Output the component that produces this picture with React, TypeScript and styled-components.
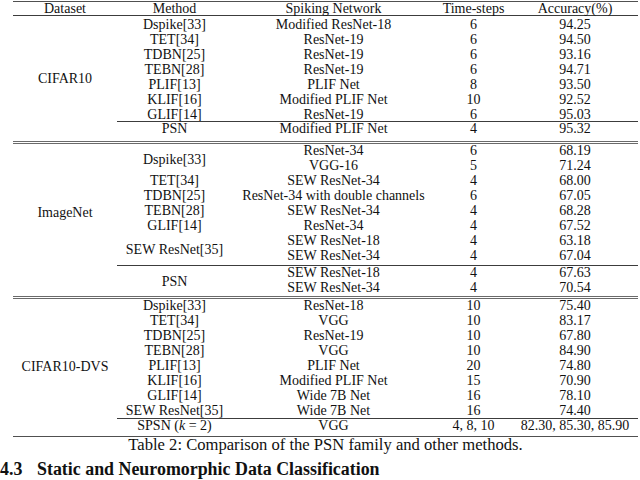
import React from "react";
import styled, { createGlobalStyle } from "styled-components";

const Global = createGlobalStyle`
  html, body { margin: 0; padding: 0; background: #ffffff; }
  body {
    font-family: "Liberation Serif", "Times New Roman", serif;
    color: #111111;
  }
`;

const Page = styled.div`
  width: 640px;
  height: 480px;
  overflow: hidden;
  padding-top: 1px;
  box-sizing: border-box;
`;

const Table = styled.div`
  margin-left: 13px;
  width: 625px;
  font-size: 14px;
`;

const Rule = styled.div<{ $tone?: string }>`
  height: 1px;
  background: ${(p) => p.$tone ?? "#3c3c3c"};
`;

const DoubleRule = styled.div`
  height: 3px;
  box-sizing: border-box;
  border-top: 1px solid #6a6a6a;
  border-bottom: 1px solid #6a6a6a;
`;

const Grid = styled.div<{ $rows: string }>`
  display: grid;
  grid-template-columns: 104px 115px 203px 77px 126px;
  grid-template-rows: ${(p) => p.$rows};
`;

const Cell = styled.div<{ $col: number; $row: string }>`
  grid-column: ${(p) => p.$col};
  grid-row: ${(p) => p.$row};
  text-align: center;
  line-height: 13px;
  white-space: nowrap;
`;

const SpanCell = styled.div<{ $col: number; $row: string }>`
  grid-column: ${(p) => p.$col};
  grid-row: ${(p) => p.$row};
  display: flex;
  align-items: center;
  justify-content: center;
  line-height: 13px;
  white-space: nowrap;
`;

const Cline = styled.div<{ $row: number }>`
  grid-column: 2 / -1;
  grid-row: ${(p) => p.$row};
  background: #3c3c3c;
`;

const MathVar = styled.i`
  font-style: italic;
`;

const Caption = styled.div`
  font-size: 16.6px;
  line-height: 16px;
  text-align: center;
  white-space: nowrap;
`;

const Heading = styled.div`
  margin-top: 7px;
  display: flex;
  font-size: 17.9px;
  line-height: 18px;
  font-weight: bold;
  white-space: nowrap;
`;

const SectionNumber = styled.span`
  width: 37px;
  flex: none;
`;

type Row = {
  track: number;
  method?: React.ReactNode;
  methodSpan?: string;
  net: React.ReactNode;
  t: string;
  acc: string;
};

type Block = {
  name: string;
  nameSpan: string;
  rows: string;
  clines: number[];
  data: Row[];
};

const blocks: Block[] = [
  {
    name: "CIFAR10",
    nameSpan: "1 / -1",
    rows: "2px repeat(6, 15px) 13px 1px 15px 4px",
    clines: [9],
    data: [
      { track: 2, method: "Dspike[33]", net: "Modified ResNet-18", t: "6", acc: "94.25" },
      { track: 3, method: "TET[34]", net: "ResNet-19", t: "6", acc: "94.50" },
      { track: 4, method: "TDBN[25]", net: "ResNet-19", t: "6", acc: "93.16" },
      { track: 5, method: "TEBN[28]", net: "ResNet-19", t: "6", acc: "94.71" },
      { track: 6, method: "PLIF[13]", net: "PLIF Net", t: "8", acc: "93.50" },
      { track: 7, method: "KLIF[16]", net: "Modified PLIF Net", t: "10", acc: "92.52" },
      { track: 8, method: "GLIF[14]", net: "ResNet-19", t: "6", acc: "95.03" },
      { track: 10, method: "PSN", net: "Modified PLIF Net", t: "4", acc: "95.32" },
    ],
  },
  {
    name: "ImageNet",
    nameSpan: "1 / 12",
    rows: "repeat(8, 15px) 1px 1px 15px 15px",
    clines: [10],
    data: [
      { track: 1, method: "Dspike[33]", methodSpan: "1 / 3", net: "ResNet-34", t: "6", acc: "68.19" },
      { track: 2, net: "VGG-16", t: "5", acc: "71.24" },
      { track: 3, method: "TET[34]", net: "SEW ResNet-34", t: "4", acc: "68.00" },
      { track: 4, method: "TDBN[25]", net: "ResNet-34 with double channels", t: "6", acc: "67.05" },
      { track: 5, method: "TEBN[28]", net: "SEW ResNet-34", t: "4", acc: "68.28" },
      { track: 6, method: "GLIF[14]", net: "ResNet-34", t: "4", acc: "67.52" },
      { track: 7, method: "SEW ResNet[35]", methodSpan: "7 / 9", net: "SEW ResNet-18", t: "4", acc: "63.18" },
      { track: 8, net: "SEW ResNet-34", t: "4", acc: "67.04" },
      { track: 11, method: "PSN", methodSpan: "11 / 13", net: "SEW ResNet-18", t: "4", acc: "67.63" },
      { track: 12, net: "SEW ResNet-34", t: "4", acc: "70.54" },
    ],
  },
  {
    name: "CIFAR10-DVS",
    nameSpan: "1 / 11",
    rows: "repeat(7, 15px) 14px 1px 15px 2px",
    clines: [9],
    data: [
      { track: 1, method: "Dspike[33]", net: "ResNet-18", t: "10", acc: "75.40" },
      { track: 2, method: "TET[34]", net: "VGG", t: "10", acc: "83.17" },
      { track: 3, method: "TDBN[25]", net: "ResNet-19", t: "10", acc: "67.80" },
      { track: 4, method: "TEBN[28]", net: "VGG", t: "10", acc: "84.90" },
      { track: 5, method: "PLIF[13]", net: "PLIF Net", t: "20", acc: "74.80" },
      { track: 6, method: "KLIF[16]", net: "Modified PLIF Net", t: "15", acc: "70.90" },
      { track: 7, method: "GLIF[14]", net: "Wide 7B Net", t: "16", acc: "78.10" },
      { track: 8, method: "SEW ResNet[35]", net: "Wide 7B Net", t: "16", acc: "74.40" },
      {
        track: 10,
        method: (
          <>
            SPSN (<MathVar>k</MathVar> = 2)
          </>
        ),
        net: "VGG",
        t: "4, 8, 10",
        acc: "82.30, 85.30, 85.90",
      },
    ],
  },
];

function BlockGrid({ block }: { block: Block }) {
  return (
    <Grid $rows={block.rows}>
      <SpanCell $col={1} $row={block.nameSpan}>
        {block.name}
      </SpanCell>
      {block.data.map((r) => (
        <React.Fragment key={r.track}>
          {r.method !== undefined &&
            (r.methodSpan ? (
              <SpanCell $col={2} $row={r.methodSpan}>
                {r.method}
              </SpanCell>
            ) : (
              <Cell $col={2} $row={String(r.track)}>
                {r.method}
              </Cell>
            ))}
          <Cell $col={3} $row={String(r.track)}>
            {r.net}
          </Cell>
          <Cell $col={4} $row={String(r.track)}>
            {r.t}
          </Cell>
          <Cell $col={5} $row={String(r.track)}>
            {r.acc}
          </Cell>
        </React.Fragment>
      ))}
      {block.clines.map((c) => (
        <Cline key={c} $row={c} />
      ))}
    </Grid>
  );
}

export default function App() {
  return (
    <Page>
      <Global />
      <Table>
        <Rule $tone="#505050" />
        <Grid $rows="13px">
          <Cell $col={1} $row="1">Dataset</Cell>
          <Cell $col={2} $row="1">Method</Cell>
          <Cell $col={3} $row="1">Spiking Network</Cell>
          <Cell $col={4} $row="1">Time-steps</Cell>
          <Cell $col={5} $row="1">Accuracy(%)</Cell>
        </Grid>
        <Rule />
        <BlockGrid block={blocks[0]} />
        <DoubleRule />
        <BlockGrid block={blocks[1]} />
        <DoubleRule />
        <BlockGrid block={blocks[2]} />
        <Rule $tone="#505050" />
        <Caption>Table 2: Comparison of the PSN family and other methods.</Caption>
      </Table>
      <Heading>
        <SectionNumber>4.3</SectionNumber>
        <span>Static and Neuromorphic Data Classification</span>
      </Heading>
    </Page>
  );
}
